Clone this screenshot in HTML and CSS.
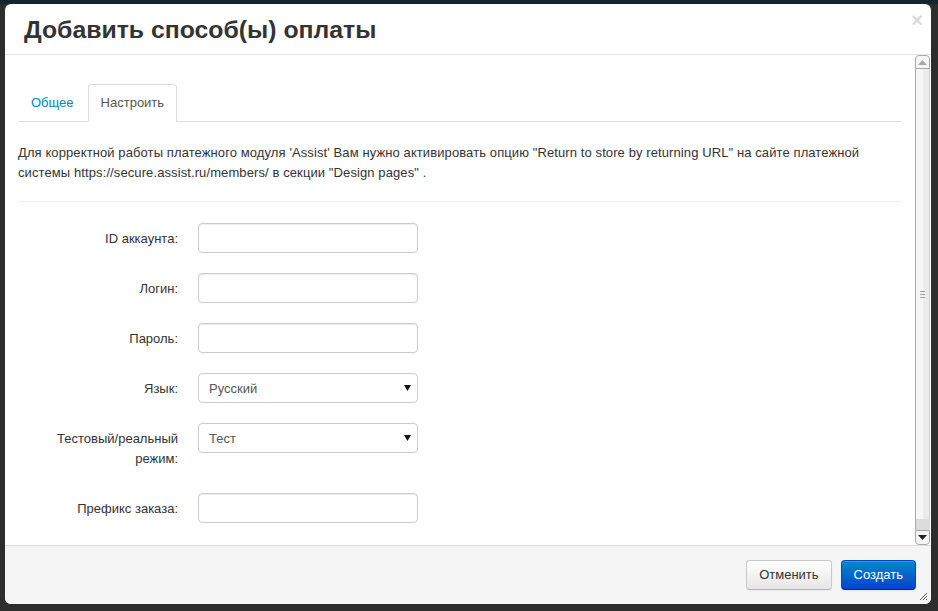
FILE: index.html
```html
<!DOCTYPE html>
<html lang="ru">
<head>
<meta charset="utf-8">
<title>Добавить способ(ы) оплаты</title>
<link rel="stylesheet" href="styles.css">
</head>
<body>
<div class="backdrop">
  <div class="modal">
    <div class="modal-header">
      <h3 class="title">Добавить способ(ы) оплаты</h3>
      <span class="close">×</span>
    </div>
    <div class="modal-body">
      <div class="content">
        <ul class="tabs">
          <li class="tab"><a>Общее</a></li>
          <li class="tab active"><a>Настроить</a></li>
        </ul>
        <p class="note">Для корректной работы платежного модуля 'Assist' Вам нужно активировать опцию "Return to store by returning URL" на сайте платежной системы https://secure.assist.ru/members/ в секции "Design pages" .</p>
        <hr class="sep">
        <div class="form">
          <div class="row"><label class="lbl">ID аккаунта:</label><div class="ctl"><input class="inp" type="text"></div></div>
          <div class="row"><label class="lbl">Логин:</label><div class="ctl"><input class="inp" type="text"></div></div>
          <div class="row"><label class="lbl">Пароль:</label><div class="ctl"><input class="inp" type="password"></div></div>
          <div class="row"><label class="lbl">Язык:</label><div class="ctl"><div class="sel"><span>Русский</span><svg class="caret" width="7" height="6" viewBox="0 0 7 6"><path d="M0 0H7L3.5 6Z" fill="#111"/></svg></div></div></div>
          <div class="row"><label class="lbl">Тестовый/реальный режим:</label><div class="ctl"><div class="sel"><span>Тест</span><svg class="caret" width="7" height="6" viewBox="0 0 7 6"><path d="M0 0H7L3.5 6Z" fill="#111"/></svg></div></div></div>
          <div class="row"><label class="lbl">Префикс заказа:</label><div class="ctl"><input class="inp" type="text"></div></div>
        </div>
      </div>
      <div class="scrollbar">
        <div class="sb-up"><svg width="9" height="5" viewBox="0 0 9 5"><path d="M0 5H9L4.5 0Z" fill="#a8a8a8"/></svg></div>
        <div class="sb-thumb"><span class="grip"></span><span class="grip"></span><span class="grip"></span></div>
        <div class="sb-rest"></div>
        <div class="sb-down"><svg width="9" height="5" viewBox="0 0 9 5"><path d="M0 0H9L4.5 5Z" fill="#222"/></svg></div>
      </div>
    </div>
    <div class="modal-footer">
      <button class="btn">Отменить</button>
      <button class="btn btn-primary">Создать</button>
      <svg class="resize" width="9" height="9" viewBox="0 0 9 9"><path d="M8 1L1 8M8 4L4 8M8 7L7 8" stroke="#555" stroke-width="1"/></svg>
    </div>
  </div>
</div>
</body>
</html>
```
FILE: styles.css
```css
* { box-sizing: border-box; }
html, body { margin: 0; padding: 0; }
body {
  width: 938px;
  height: 611px;
  overflow: hidden;
  background: linear-gradient(to bottom, #14252d 0, #14252d 4px, #2d2d2d 4px);
  font-family: "Liberation Sans", Arial, sans-serif;
  font-size: 13px;
  line-height: 20px;
  color: #333;
}
.backdrop { padding: 4px 7px 7px 5px; }
.modal {
  width: 926px;
  height: 600px;
  background: #fff;
  border-radius: 6px;
  display: flex;
  flex-direction: column;
  overflow: hidden;
}
.modal-header {
  position: relative;
  height: 51px;
  border-bottom: 1px solid #e5e5e5;
  padding: 0 19px;
  display: flex;
  align-items: center;
}
.title {
  margin: 0;
  font-size: 24.8px;
  line-height: 30px;
  font-weight: bold;
  color: #333;
  padding-top: 1px;
}
.close {
  position: absolute;
  right: 8px;
  top: 6px;
  font-size: 20px;
  font-weight: bold;
  line-height: 20px;
  color: #000;
  opacity: 0.15;
}
.modal-body {
  height: 490px;
  display: flex;
  flex-direction: row;
}
.content {
  flex: 1;
  padding: 29px 13px 0 13px;
  overflow: hidden;
}
.tabs {
  list-style: none;
  margin: 0 0 21px 0;
  padding: 0;
  display: flex;
  border-bottom: 1px solid #ddd;
}
.tab { margin-right: 1px; margin-bottom: -1px; }
.tab a {
  display: block;
  padding: 8px 12px;
  line-height: 20px;
  border: 1px solid transparent;
  border-radius: 4px 4px 0 0;
  color: #0088cc;
}
.tab.active a {
  color: #555;
  background: #fff;
  border-color: #ddd #ddd transparent;
}
.note { margin: 0; letter-spacing: 0.1px; }
.sep {
  margin: 18px 0 21px;
  border: 0;
  border-top: 1px solid #eee;
  height: 0;
}
.row {
  display: flex;
  margin-bottom: 20px;
}
.lbl {
  width: 160px;
  padding: 6px 0 4px;
  text-align: right;
  line-height: 20px;
  margin-right: 20px;
}
.ctl { width: 220px; }
.inp {
  display: block;
  width: 220px;
  height: 30px;
  border: 1px solid #ccc;
  border-radius: 4px;
  box-shadow: inset 0 1px 1px rgba(0,0,0,0.075);
  background: #fff;
  font: inherit;
  padding: 4px 6px;
  margin: 0;
  outline: none;
}
.sel {
  position: relative;
  width: 220px;
  height: 30px;
  border: 1px solid #ccc;
  border-radius: 4px;
  background: #fff;
  padding: 5px 10px 3px;
  line-height: 20px;
  color: #555;
}
.caret {
  position: absolute;
  right: 6px;
  top: 11px;
}
.scrollbar {
  width: 15px;
  display: flex;
  flex-direction: column;
  margin-right: 1px;
}
.sb-up {
  height: 14px;
  border: 1px solid #a9a9a9;
  border-radius: 4px 4px 0 0;
  background: #f6f6f6;
  display: flex;
  align-items: center;
  justify-content: center;
}
.sb-thumb {
  flex: 1;
  border-left: 1px solid #a9a9a9;
  border-right: 1px solid #cfcfcf;
  background: linear-gradient(to right, #f6f6f6 0, #f6f6f6 55%, #ebebeb 55%);
  display: flex;
  flex-direction: column;
  align-items: center;
  justify-content: center;
  gap: 2px;
}
.grip {
  width: 5px;
  height: 1px;
  background: #a0a0a0;
}
.sb-rest {
  height: 11px;
  border-left: 1px solid #a9a9a9;
  background: #dcdcdc;
}
.sb-down {
  height: 15px;
  border: 1px solid #a9a9a9;
  border-radius: 0 0 4px 4px;
  background: #f6f6f6;
  display: flex;
  align-items: center;
  justify-content: center;
}
.modal-footer {
  position: relative;
  flex: 1;
  background: #f5f5f5;
  border-top: 1px solid #ddd;
  padding: 14px 15px;
  display: flex;
  justify-content: flex-end;
  align-items: flex-start;
  gap: 9px;
}
.btn {
  height: 30px;
  padding: 4px 12px;
  font-family: "Liberation Sans", Arial, sans-serif;
  font-size: 13px;
  line-height: 20px;
  color: #333;
  border: 1px solid #c8c8c8;
  border-bottom-color: #b3b3b3;
  border-radius: 4px;
  background: linear-gradient(to bottom, #ffffff, #e6e6e6);
  box-shadow: inset 0 1px 0 rgba(255,255,255,0.2), 0 1px 2px rgba(0,0,0,0.05);
  margin: 0;
}
.btn-primary {
  color: #fff;
  background: linear-gradient(to bottom, #0088cc, #0044cc);
  border-color: #0044cc #0044cc #002a80;
}
.resize {
  position: absolute;
  right: 3px;
  bottom: 3px;
}
```
